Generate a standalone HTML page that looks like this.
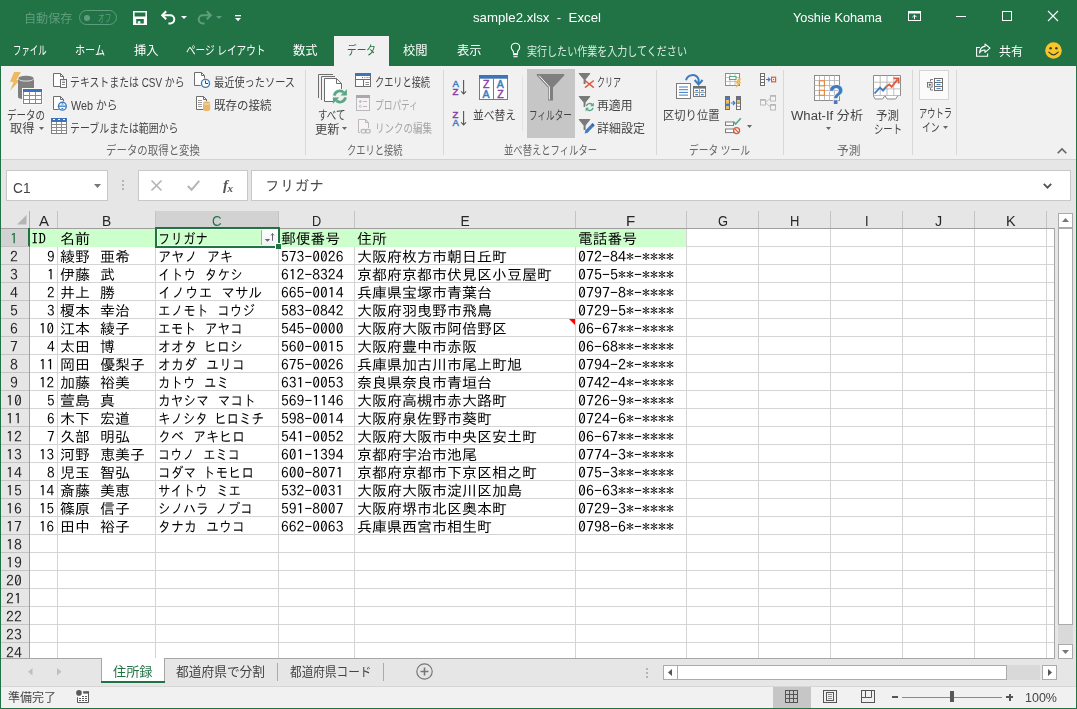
<!DOCTYPE html>
<html lang="ja"><head><meta charset="utf-8"><title>sample2.xlsx - Excel</title>
<style>
html,body{margin:0;padding:0;background:#fff}
#w{position:relative;width:1077px;height:709px;overflow:hidden;background:#e6e6e6;font-family:"Liberation Sans","Noto Sans CJK JP",sans-serif}
.t{position:absolute;white-space:pre;line-height:20px;transform-origin:0 50%}
.u{font-family:"Liberation Sans","Noto Sans CJK JP",sans-serif}
.c{font-family:"IPAGothic","Liberation Sans",sans-serif}
.s{letter-spacing:-4.67px}
#tx{position:absolute;left:0;top:0;width:1077px;height:709px;will-change:transform}
.a{position:absolute}
svg{position:absolute;overflow:visible}
.vs{position:absolute;width:1px;background:#d4d4d4}
.hl{position:absolute;height:1px;background:#d4d4d4;left:30px}
.vl{position:absolute;width:1px;background:#d4d4d4;top:229px}
</style></head><body><div id="w">
<div class="a" style="left:0px;top:0px;width:1077px;height:66px;background:#217346;"></div><div class="a" style="left:334px;top:36px;width:55px;height:30px;background:#f1f1f1;"></div><div class="a" style="left:79px;top:10px;width:36px;height:13px;border:1px solid #5e9e7d;border-radius:8px"></div><div class="a" style="left:84px;top:14.5px;width:6px;height:6px;border-radius:3px;background:#5e9e7d"></div><svg style="left:133px;top:11px" width="14" height="14" viewBox="0 0 14 14"><path d="M0 0H14V14H0Z M1.6 1.6V5.6H12.4V1.6Z M3.2 8V12.4H10.8V8Z" fill="#fff" fill-rule="evenodd"/><rect x="4.8" y="10.2" width="2.6" height="2.4" fill="#fff"/></svg><svg style="left:161px;top:10px" width="16" height="14" viewBox="0 0 16 14"><path d="M5.2 1.2 1.2 5.2 5.2 9.2" fill="none" stroke="#fff" stroke-width="2"/><path d="M1.6 5.2H9.2A4.1 4.1 0 0 1 9.2 13.4H7.4" fill="none" stroke="#fff" stroke-width="2"/></svg><svg style="left:180.5px;top:16px" width="6" height="3" viewBox="0 0 6 3"><path d="M0 0H6L3 3Z" fill="#fff"/></svg><svg style="left:196px;top:10px" width="16" height="14" viewBox="0 0 16 14"><path d="M10.8 1.2 14.8 5.2 10.8 9.2" fill="none" stroke="#5e9e7d" stroke-width="2"/><path d="M14.4 5.2H6.8A4.1 4.1 0 0 0 6.8 13.4H8.6" fill="none" stroke="#5e9e7d" stroke-width="2"/></svg><svg style="left:216px;top:16px" width="6" height="3" viewBox="0 0 6 3"><path d="M0 0H6L3 3Z" fill="#5e9e7d"/></svg><svg style="left:235.3px;top:14.8px" width="6" height="7" viewBox="0 0 6 7"><rect x="0" y="0" width="6" height="1.3" fill="#fff"/><path d="M0 3H6L3 6.2Z" fill="#fff"/></svg><svg style="left:908px;top:11px" width="13" height="10" viewBox="0 0 13 10"><rect x="0.5" y="0.5" width="12" height="9" fill="none" stroke="#fff"/><rect x="0.5" y="0.5" width="12" height="2" fill="#fff"/><path d="M6.5 8.2V4.2M4.4 6.2 6.5 4.1 8.6 6.2" fill="none" stroke="#fff"/></svg><div class="a" style="left:956px;top:16px;width:10px;height:1px;background:#fff;"></div><div class="a" style="left:1002px;top:11px;width:8px;height:8px;border:1px solid #fff"></div><svg style="left:1048px;top:11px" width="10" height="10" viewBox="0 0 10 10"><path d="M0 0 10 10M10 0 0 10" stroke="#fff" stroke-width="1.1" fill="none"/></svg><svg style="left:510px;top:42px" width="11" height="16" viewBox="0 0 11 16"><path d="M3.4 11.2V9.8C3.4 8.7 1.3 7.7 1.3 5.4A4.2 4.2 0 0 1 9.7 5.4C9.7 7.7 7.6 8.7 7.6 9.8V11.2" fill="none" stroke="#fff" stroke-width="1.1"/><rect x="3.1" y="11.2" width="4.8" height="2" fill="#fff"/><path d="M3.4 14.7H7.6" stroke="#fff" stroke-width="1.1"/></svg><svg style="left:976px;top:43px" width="15" height="14" viewBox="0 0 15 14"><path d="M3.8 4.5H0.6V13.3H11.6V10.6" fill="none" stroke="#fff" stroke-width="1.1"/><path d="M9 1 14 5.2 9 9.4V7C6 7 4.4 8 3.6 10 3.8 6 6 3.6 9 3.4Z" fill="none" stroke="#fff" stroke-width="1.1" stroke-linejoin="round"/></svg><svg style="left:1044.5px;top:42px" width="17" height="17" viewBox="0 0 17 17"><circle cx="8.5" cy="8.5" r="8.3" fill="#f7c628"/><circle cx="5.6" cy="6.3" r="1.2" fill="#3b3b3b"/><circle cx="11.4" cy="6.3" r="1.2" fill="#3b3b3b"/><path d="M3.8 10.2Q8.5 15.4 13.2 10.2" fill="none" stroke="#3b3b3b" stroke-width="1.2" stroke-linecap="round"/></svg><div class="a" style="left:1px;top:66px;width:1075px;height:93px;background:#f1f1f1;"></div><div class="a" style="left:1px;top:159px;width:1075px;height:1px;background:#d2d2d2;"></div><div class="vs" style="left:305px;top:70px;height:85px;background:#d8d8d8"></div><div class="vs" style="left:443px;top:70px;height:85px;background:#d8d8d8"></div><div class="vs" style="left:656px;top:70px;height:85px;background:#d8d8d8"></div><div class="vs" style="left:783px;top:70px;height:85px;background:#d8d8d8"></div><div class="vs" style="left:912px;top:70px;height:85px;background:#d8d8d8"></div><div class="vs" style="left:956px;top:70px;height:85px;background:#d8d8d8"></div><div class="vs" style="left:522px;top:76px;height:55px;background:#e2e2e2"></div><div class="a" style="left:527px;top:69px;width:48px;height:69px;background:#c6c6c6;"></div><svg style="left:38.5px;top:127px" width="5" height="3" viewBox="0 0 5 3"><path d="M0 0H5L2.5 3Z" fill="#666"/></svg><svg style="left:342px;top:127px" width="5" height="3" viewBox="0 0 5 3"><path d="M0 0H5L2.5 3Z" fill="#666"/></svg><svg style="left:747px;top:125px" width="5" height="3" viewBox="0 0 5 3"><path d="M0 0H5L2.5 3Z" fill="#666"/></svg><svg style="left:826px;top:127px" width="5" height="3" viewBox="0 0 5 3"><path d="M0 0H5L2.5 3Z" fill="#666"/></svg><div class="a" style="left:919px;top:70px;width:30px;height:30px;border:1px solid #d4d4d4;background:#fbfbfb;box-sizing:border-box"></div><svg style="left:943px;top:126px" width="5" height="3" viewBox="0 0 5 3"><path d="M0 0H5L2.5 3Z" fill="#666"/></svg><svg style="left:1057px;top:148px" width="10" height="6" viewBox="0 0 10 6"><path d="M0.7 5.3 5 1 9.3 5.3" fill="none" stroke="#666" stroke-width="1.6"/></svg><svg style="left:0;top:0" width="1077" height="160" viewBox="0 0 1077 160"><path d="M14.1 72H20.9L16.4 79.9 19.9 80.2 10 90.8 13.6 81.9 10 81.7Z" fill="#efb960"/><path d="M18 78.4V97A8 2.6 0 0 0 34 97V78.4Z" fill="#7f7f7f"/><ellipse cx="26" cy="78.6" rx="8" ry="3" fill="#e4e4e4"/><ellipse cx="26" cy="78.2" rx="7.6" ry="2.4" fill="#7f7f7f"/><rect x="22" y="88" width="21" height="17" fill="#f8f8f8"/><rect x="23.5" y="89.5" width="18" height="14" fill="#fff" stroke="#858585"/><rect x="23" y="89" width="19" height="3" fill="#3e73b7"/><path d="M29.5 92V103M35.5 92V103M24 95.5H41M24 99.5H41" stroke="#8d8d8d" fill="none"/><path d="M53.5 73.5H60.5L63.5 76.5V86.5H53.5Z" fill="#fff" stroke="#6e6e6e"/><path d="M60.5 73.5V76.5H63.5" fill="none" stroke="#6e6e6e"/><rect x="60.5" y="79.5" width="6" height="8" fill="#fff" stroke="#6e6e6e"/><path d="M62 82.5H65M62 84.5H65" stroke="#8c8c8c" stroke-width="1"/><path d="M62 81H65" stroke="#8c8c8c" stroke-width=".7"/><path d="M53.5 96.5H60.5L63.5 99.5V109.5H53.5Z" fill="#fff" stroke="#6e6e6e"/><path d="M60.5 96.5V99.5H63.5" fill="none" stroke="#6e6e6e"/><circle cx="62.4" cy="106.2" r="4.9" fill="#f1f1f1"/><circle cx="62.4" cy="106.2" r="3.9" fill="#fff" stroke="#3e7cc2" stroke-width="1.4"/><path d="M59 106.2H65.8" stroke="#3e7cc2" stroke-width="1.3"/><path d="M61 104.4 62.4 103 63.8 104.4ZM61 108 62.4 109.4 63.8 108Z" fill="#3e7cc2"/><rect x="51.5" y="118.5" width="15" height="15" fill="#fff" stroke="#7f7f7f"/><rect x="51" y="118" width="16" height="4" fill="#3e73b7"/><path d="M53 119.5H55M58 119.5H60M63 119.5H65" stroke="#fff" stroke-width="1"/><path d="M56.5 122V133M61.5 122V133M52 124.5H66M52 127.5H66M52 130.5H66" stroke="#8d8d8d" fill="none"/><path d="M194.5 72.5H201.5L204.5 75.5V85.5H194.5Z" fill="#fff" stroke="#6e6e6e"/><path d="M201.5 72.5V75.5H204.5" fill="none" stroke="#6e6e6e"/><circle cx="205.5" cy="83.4" r="5.2" fill="#f1f1f1"/><circle cx="205.5" cy="83.4" r="4" fill="#fff" stroke="#3e7cc2" stroke-width="1.4"/><path d="M205.5 80.6V83.5H208" fill="none" stroke="#444" stroke-width="1"/><path d="M196.5 96.5H203.5L206.5 99.5V109.5H196.5Z" fill="#fff" stroke="#6e6e6e"/><path d="M203.5 96.5V99.5H206.5" fill="none" stroke="#6e6e6e"/><path d="M198 100.5H202M198 102.5H202M198 104.5H202M198 106.5H202" stroke="#9a9a9a" stroke-width="1"/><path d="M203 102.8V109.6A3.6 1.5 0 0 0 210.2 109.6V102.8Z" fill="#e9b86d"/><ellipse cx="206.6" cy="102.9" rx="3.6" ry="1.6" fill="#f6e3c3"/><ellipse cx="206.6" cy="102.6" rx="3.5" ry="1.2" fill="#e9b86d"/><path d="M318.5 98V74.5H333" fill="none" stroke="#6e6e6e"/><path d="M321.5 100V76.5H335" fill="none" stroke="#6e6e6e"/><path d="M324.5 78.5H336.5L341.5 83.5V101.5H324.5Z" fill="#fff" stroke="#6e6e6e"/><path d="M336.5 78.5V83.5H341.5" fill="none" stroke="#6e6e6e"/><circle cx="339.9" cy="96.5" r="7.8" fill="#f1f1f1"/><path d="M334.4 95.6A5.5 5.5 0 0 1 343.6 92.4" fill="none" stroke="#5aa786" stroke-width="2.8"/><path d="M346.9 89.2V95.6H340.5Z" fill="#5aa786"/><path d="M345.4 97.4A5.5 5.5 0 0 1 336.2 100.6" fill="none" stroke="#5aa786" stroke-width="2.8"/><path d="M332.9 103.8V97.4H339.3Z" fill="#5aa786"/><rect x="355.5" y="73.5" width="15" height="13" fill="#fff" stroke="#6e6e6e"/><rect x="355" y="73" width="16" height="3" fill="#3e73b7"/><path d="M363.5 79V86.5M356 79.5H370" stroke="#6e6e6e"/><path d="M365.5 82.5H369M365.5 84.5H369" stroke="#8c8c8c" stroke-width="1"/><path d="M362 77.6H363M364.3 77.6H365.3M366.6 77.6H367.6M368.6 77.6H369.6" stroke="#6e6e6e" stroke-width="1"/><rect x="356.5" y="95.5" width="13" height="15" fill="#f6f2f6" stroke="#b9b9b9"/><rect x="356" y="95" width="14" height="3" fill="#a9a9a9"/><circle cx="360.3" cy="101.6" r="1.3" fill="#b9b9b9"/><circle cx="360.3" cy="106.4" r="1.1" fill="none" stroke="#b9b9b9" stroke-width=".8"/><path d="M363 101.5H367M363 106.5H367" stroke="#b9b9b9"/><path d="M358.5 119.5H365.5L368.5 122.5V132.5H358.5Z" fill="#f6f2f6" stroke="#b9b9b9"/><path d="M365.5 119.5V122.5H368.5" fill="none" stroke="#b9b9b9"/><rect x="360" y="128" width="11.5" height="6.5" fill="#f1f1f1"/><ellipse cx="363.6" cy="131.2" rx="2.5" ry="1.8" fill="none" stroke="#b9b9b9" stroke-width="1.2"/><ellipse cx="367.8" cy="131.2" rx="2.5" ry="1.8" fill="none" stroke="#b9b9b9" stroke-width="1.2"/><text x="452.4" y="87.1" font-family="Liberation Sans,sans-serif" font-size="9.6" fill="#3e7cc2" stroke="#3e7cc2" stroke-width=".45">A</text><text x="452.4" y="95" font-family="Liberation Sans,sans-serif" font-size="9.6" fill="#8b3fa9" stroke="#8b3fa9" stroke-width=".45">Z</text><path d="M463.6 80V94M461.2 91.4 463.6 94 466 91.4" fill="none" stroke="#555" stroke-width="1.1"/><text x="452.4" y="117.8" font-family="Liberation Sans,sans-serif" font-size="9.6" fill="#8b3fa9" stroke="#8b3fa9" stroke-width=".45">Z</text><text x="452.4" y="125.7" font-family="Liberation Sans,sans-serif" font-size="9.6" fill="#3e7cc2" stroke="#3e7cc2" stroke-width=".45">A</text><path d="M463.6 111V125M461.2 122.4 463.6 125 466 122.4" fill="none" stroke="#555" stroke-width="1.1"/><rect x="479.5" y="75.5" width="28" height="24" fill="#fff" stroke="#7a7a7a"/><rect x="479" y="75" width="29" height="3.7" fill="#3e73b7"/><path d="M493.5 78.7V99.5" stroke="#7a7a7a"/><text x="483" y="87.6" font-family="Liberation Sans,sans-serif" font-size="10.5" fill="#8b3fa9" stroke="#8b3fa9" stroke-width=".5">Z</text><text x="482.6" y="97.8" font-family="Liberation Sans,sans-serif" font-size="10.5" fill="#3e7cc2" stroke="#3e7cc2" stroke-width=".5">A</text><text x="496.8" y="87.6" font-family="Liberation Sans,sans-serif" font-size="10.5" fill="#3e7cc2" stroke="#3e7cc2" stroke-width=".5">A</text><text x="497.2" y="97.8" font-family="Liberation Sans,sans-serif" font-size="10.5" fill="#8b3fa9" stroke="#8b3fa9" stroke-width=".5">Z</text><path d="M536.8 74H564.2V75.5L553 87.5V100.6H548V87.5L536.8 75.5Z" fill="#7f7f7f"/><path d="M539 75.6 549.3 86.8V99.5" fill="none" stroke="#fff" stroke-width="1"/><path d="M578.8 73H590.2V73.8L585.6 79.6V84H583.6V79.6L578.8 73.8Z" fill="#7a7a7a"/><path d="M578.8 96H590.2V96.8L585.6 102.6V107H583.6V102.6L578.8 96.8Z" fill="#7a7a7a"/><path d="M578.8 119H590.2V119.8L585.6 125.6V130H583.6V125.6L578.8 119.8Z" fill="#7a7a7a"/><path d="M585 80.5 593.8 87.6M593.8 80.5 585 87.6" stroke="#de5a3a" stroke-width="1.5" fill="none"/><circle cx="589.7" cy="107" r="4.6" fill="#f1f1f1"/><path d="M586.4 106.2A3.4 3.4 0 0 1 592.2 104.6" fill="none" stroke="#5aa786" stroke-width="1.5"/><path d="M593.8 102.6V106.2H590.2Z" fill="#5aa786"/><path d="M593 107.8A3.4 3.4 0 0 1 587.2 109.4" fill="none" stroke="#5aa786" stroke-width="1.5"/><path d="M585.6 111.4V107.8H589.2Z" fill="#5aa786"/><path d="M586.2 131.8 592.4 125.4" stroke="#3e7cc2" stroke-width="3.2" fill="none"/><path d="M584.6 133.6 585.4 130.6 587.6 132.8Z" fill="#3e7cc2"/><path d="M592.2 125.6 593.6 124.2" stroke="#2f63a5" stroke-width="3.2"/><rect x="676.5" y="83.5" width="14" height="15" fill="#fff" stroke="#7a7a7a"/><path d="M679 87H688M679 89.7H688M679 92.4H688M679 95.1H688" stroke="#3e7cc2" stroke-width="1"/><rect x="693.5" y="86.5" width="12" height="10" fill="#fff" stroke="#7a7a7a"/><rect x="693" y="86" width="13" height="2.6" fill="#6e6e6e"/><path d="M699.5 88.6V96.5M693.5 92.5H705.5" stroke="#8c8c8c" stroke-width=".8"/><path d="M695.3 90.6H698M701 90.6H703.7M695.3 94.6H698M701 94.6H703.7" stroke="#3e7cc2" stroke-width="1.1"/><path d="M686 80.2A6.6 6.6 0 0 1 698.6 79.4V83.4" fill="none" stroke="#3e7cc2" stroke-width="2"/><path d="M694.6 80 698.6 84.4 702.6 80" fill="none" stroke="#3e7cc2" stroke-width="2"/><rect x="725.5" y="73.5" width="14" height="12" fill="#fff" stroke="#8c8c8c"/><path d="M725.5 77.5H739.5M725.5 81.5H739.5M730 73.5V85.5M735 73.5V85.5" stroke="#b5b5b5" stroke-width=".8"/><rect x="729.5" y="76.5" width="6.5" height="3" fill="#fff" stroke="#5aa786" stroke-width="1.1"/><path d="M738 78.6H741.4L739.4 82H741.4L735.6 88.4 737.4 83.4H735.4Z" fill="#efb960"/><rect x="725.5" y="96.5" width="4" height="13" fill="#fff" stroke="#6e6e6e"/><rect x="736.5" y="96.5" width="4" height="13" fill="#fff" stroke="#6e6e6e"/><rect x="726" y="97" width="3" height="3" fill="#3e7cc2"/><rect x="726" y="100.2" width="3" height="3" fill="#efb960"/><rect x="726" y="103.4" width="3" height="3" fill="#3e7cc2"/><rect x="726" y="106.4" width="3" height="2.6" fill="#efb960"/><rect x="737" y="97" width="3" height="3" fill="#3e7cc2"/><rect x="737" y="100.2" width="3" height="3" fill="#efb960"/><path d="M736.5 103.3H740.5M736.5 106.3H740.5" stroke="#6e6e6e" stroke-width=".8"/><path d="M730.8 103H734.6M733 101 735 103 733 105" fill="none" stroke="#3e7cc2" stroke-width="1.1"/><rect x="725.5" y="122" width="8" height="3.4" fill="#fff" stroke="#7a7a7a"/><rect x="725.5" y="129" width="8" height="3.6" fill="#fff" stroke="#7a7a7a"/><path d="M733.4 121.6 735.6 124 740.8 118.2" fill="none" stroke="#5aa786" stroke-width="1.6"/><circle cx="736.6" cy="130.6" r="3" fill="#f1f1f1" stroke="#de5a3a" stroke-width="1.3"/><path d="M734.6 128.6 738.6 132.6" stroke="#de5a3a" stroke-width="1.2"/><rect x="760.5" y="73.5" width="4" height="12" fill="#fff" stroke="#6e6e6e"/><path d="M760.5 76.5H764.5M760.5 79.5H764.5M760.5 82.5H764.5" stroke="#6e6e6e"/><path d="M766 79.5H769.6M768 77.6 770 79.5 768 81.4" fill="none" stroke="#3e7cc2" stroke-width="1.1"/><rect x="771.6" y="77.2" width="4" height="4.6" fill="#fff" stroke="#de5a3a" stroke-width="1.2"/><rect x="773" y="78.8" width="1.2" height="1.4" fill="#de5a3a"/><rect x="760.5" y="99.5" width="5" height="5.5" fill="#f4f4f4" stroke="#b9b9b9"/><rect x="770.5" y="95.5" width="5" height="5.5" fill="#f4f4f4" stroke="#b9b9b9"/><rect x="770.5" y="104.5" width="5" height="5.5" fill="#f4f4f4" stroke="#b9b9b9"/><path d="M765.5 102.3 770.5 98.3M765.5 102.3 770.5 107.3" stroke="#b9b9b9" stroke-width=".9"/><rect x="760" y="99" width="6" height="1.8" fill="#b9b9b9"/><rect x="770" y="95" width="6" height="1.8" fill="#b9b9b9"/><rect x="770" y="104" width="6" height="1.8" fill="#b9b9b9"/><rect x="814.5" y="75.5" width="25" height="25" fill="#fff" stroke="#8c8c8c"/><path d="M819.5 75.5V100.5M824.5 75.5V100.5M829.5 75.5V100.5M834.5 75.5V100.5M814.5 80.5H839.5M814.5 85.5H839.5M814.5 90.5H839.5M814.5 95.5H839.5" stroke="#b5b5b5" stroke-width=".9"/><rect x="819.4" y="80.8" width="5" height="5" fill="#fff" stroke="#e68a3c" stroke-width="1.2"/><rect x="819.4" y="90.3" width="5" height="5" fill="#fff" stroke="#e68a3c" stroke-width="1.2"/><text transform="translate(828.4 103.6) scale(.9 1)" font-family="Liberation Sans,sans-serif" font-weight="bold" font-size="27.6" fill="#3e7cc2" stroke="#f1f1f1" stroke-width="1.6" paint-order="stroke">?</text><path d="M873.5 75.5H900.5V95.5H898L895.5 99H887L885 95.5 882.5 99H875L873.5 96Z" fill="#fff" stroke="#8c8c8c"/><path d="M880.2 75.5V95.5M887 75.5V95.5M893.8 75.5V95.5M873.5 82.2H900.5M873.5 88.9H900.5M873.5 95.5H900.5" stroke="#b5b5b5" stroke-width=".9"/><path d="M874.5 93.5 880 87.6 883 90.6 886.2 86.6" fill="none" stroke="#3e7cc2" stroke-width="1.8"/><path d="M886.2 86.6 889.4 84.4 891.6 86.8 897.6 79.4" fill="none" stroke="#de5a3a" stroke-width="1.8"/><path d="M893.6 78.4H898.6V83.6" fill="none" stroke="#de5a3a" stroke-width="1.8"/><rect x="934.5" y="78.5" width="8" height="12" fill="#fff" stroke="#6e6e6e"/><path d="M934.5 82.5H942.5M934.5 86.5H942.5" stroke="#6e6e6e"/><path d="M936.5 80.6H940.6M936.5 84.6H940.6M936.5 88.6H940.6" stroke="#3e7cc2" stroke-width="1"/><rect x="927.5" y="82.5" width="4.6" height="4.6" fill="#fff" stroke="#6e6e6e" stroke-width=".9"/><path d="M928.6 84.8H931M929.8 83.6V86" stroke="#444" stroke-width=".8"/><path d="M933 79.5H930.5V81.5M933 90H930.5V88" fill="none" stroke="#6e6e6e" stroke-width=".9"/></svg><div class="a" style="left:6px;top:170px;width:102px;height:31px;border:1px solid #c8c8c8;background:#fff;box-sizing:border-box"></div><svg style="left:94px;top:183.5px" width="7" height="4" viewBox="0 0 7 4"><path d="M0 0H7L3.5 4Z" fill="#777"/></svg><div class="a" style="left:122px;top:180px;width:2px;height:2px;background:#b4b4b4;"></div><div class="a" style="left:122px;top:184px;width:2px;height:2px;background:#b4b4b4;"></div><div class="a" style="left:122px;top:188px;width:2px;height:2px;background:#b4b4b4;"></div><div class="a" style="left:138px;top:170px;width:110px;height:31px;border:1px solid #c8c8c8;background:#fff;box-sizing:border-box"></div><svg style="left:151px;top:180px" width="11" height="11" viewBox="0 0 11 11"><path d="M0.5 0.5 10.5 10.5M10.5 0.5 0.5 10.5" stroke="#b4b4b4" stroke-width="1.6" fill="none"/></svg><svg style="left:187px;top:180px" width="13" height="11" viewBox="0 0 13 11"><path d="M0.8 6 4.6 9.8 12.2 0.8" stroke="#b4b4b4" stroke-width="2" fill="none"/></svg><span class="t" style="left:223px;top:174.5px;font-family:'Liberation Serif',serif;font-style:italic;font-weight:bold;font-size:15px;color:#555;will-change:transform">f<span style="font-size:11px;position:relative;top:1.5px;left:-0.5px">x</span></span><div class="a" style="left:251px;top:170px;width:820px;height:31px;border:1px solid #c8c8c8;background:#fff;box-sizing:border-box"></div><svg style="left:1043px;top:183px" width="9" height="6" viewBox="0 0 9 6"><path d="M0.8 0.8 4.5 4.6 8.2 0.8" fill="none" stroke="#555" stroke-width="1.9"/></svg><div class="a" style="left:1px;top:211px;width:1053px;height:447px;background:#fff;"></div><div class="a" style="left:1px;top:211px;width:1053px;height:17px;background:#e6e6e6;"></div><div class="a" style="left:1px;top:228px;width:1053px;height:1px;background:#9f9f9f;"></div><div class="a" style="left:1px;top:229px;width:28px;height:429px;background:#e6e6e6;"></div><div class="a" style="left:29px;top:229px;width:1px;height:429px;background:#9f9f9f;"></div><svg style="left:16.5px;top:215.3px" width="9.5" height="9.5" viewBox="0 0 9.5 9.5"><path d="M9.5 0V9.5H0Z" fill="#b4b4b4"/></svg><div class="a" style="left:29px;top:211px;width:1px;height:17px;background:#b0b0b0;"></div><div class="a" style="left:57px;top:211px;width:1px;height:17px;background:#c4c4c4;"></div><div class="a" style="left:155px;top:211px;width:1px;height:17px;background:#c4c4c4;"></div><div class="a" style="left:278px;top:211px;width:1px;height:17px;background:#c4c4c4;"></div><div class="a" style="left:354px;top:211px;width:1px;height:17px;background:#c4c4c4;"></div><div class="a" style="left:575px;top:211px;width:1px;height:17px;background:#c4c4c4;"></div><div class="a" style="left:686px;top:211px;width:1px;height:17px;background:#c4c4c4;"></div><div class="a" style="left:758px;top:211px;width:1px;height:17px;background:#c4c4c4;"></div><div class="a" style="left:830px;top:211px;width:1px;height:17px;background:#c4c4c4;"></div><div class="a" style="left:902px;top:211px;width:1px;height:17px;background:#c4c4c4;"></div><div class="a" style="left:974px;top:211px;width:1px;height:17px;background:#c4c4c4;"></div><div class="a" style="left:1046px;top:211px;width:1px;height:17px;background:#c4c4c4;"></div><div class="a" style="left:156px;top:211px;width:122px;height:16px;background:#d2d2d2;"></div><div class="a" style="left:1px;top:229px;width:27px;height:17px;background:#d2d2d2;"></div><div class="a" style="left:28px;top:228px;width:2px;height:19px;background:#217346;"></div><div class="hl" style="top:246px;width:1024px"></div><div class="a" style="left:1px;top:246px;width:28px;height:1px;background:#c4c4c4;"></div><div class="hl" style="top:264px;width:1024px"></div><div class="a" style="left:1px;top:264px;width:28px;height:1px;background:#c4c4c4;"></div><div class="hl" style="top:282px;width:1024px"></div><div class="a" style="left:1px;top:282px;width:28px;height:1px;background:#c4c4c4;"></div><div class="hl" style="top:300px;width:1024px"></div><div class="a" style="left:1px;top:300px;width:28px;height:1px;background:#c4c4c4;"></div><div class="hl" style="top:318px;width:1024px"></div><div class="a" style="left:1px;top:318px;width:28px;height:1px;background:#c4c4c4;"></div><div class="hl" style="top:336px;width:1024px"></div><div class="a" style="left:1px;top:336px;width:28px;height:1px;background:#c4c4c4;"></div><div class="hl" style="top:354px;width:1024px"></div><div class="a" style="left:1px;top:354px;width:28px;height:1px;background:#c4c4c4;"></div><div class="hl" style="top:372px;width:1024px"></div><div class="a" style="left:1px;top:372px;width:28px;height:1px;background:#c4c4c4;"></div><div class="hl" style="top:390px;width:1024px"></div><div class="a" style="left:1px;top:390px;width:28px;height:1px;background:#c4c4c4;"></div><div class="hl" style="top:408px;width:1024px"></div><div class="a" style="left:1px;top:408px;width:28px;height:1px;background:#c4c4c4;"></div><div class="hl" style="top:426px;width:1024px"></div><div class="a" style="left:1px;top:426px;width:28px;height:1px;background:#c4c4c4;"></div><div class="hl" style="top:444px;width:1024px"></div><div class="a" style="left:1px;top:444px;width:28px;height:1px;background:#c4c4c4;"></div><div class="hl" style="top:462px;width:1024px"></div><div class="a" style="left:1px;top:462px;width:28px;height:1px;background:#c4c4c4;"></div><div class="hl" style="top:480px;width:1024px"></div><div class="a" style="left:1px;top:480px;width:28px;height:1px;background:#c4c4c4;"></div><div class="hl" style="top:498px;width:1024px"></div><div class="a" style="left:1px;top:498px;width:28px;height:1px;background:#c4c4c4;"></div><div class="hl" style="top:516px;width:1024px"></div><div class="a" style="left:1px;top:516px;width:28px;height:1px;background:#c4c4c4;"></div><div class="hl" style="top:534px;width:1024px"></div><div class="a" style="left:1px;top:534px;width:28px;height:1px;background:#c4c4c4;"></div><div class="hl" style="top:552px;width:1024px"></div><div class="a" style="left:1px;top:552px;width:28px;height:1px;background:#c4c4c4;"></div><div class="hl" style="top:570px;width:1024px"></div><div class="a" style="left:1px;top:570px;width:28px;height:1px;background:#c4c4c4;"></div><div class="hl" style="top:588px;width:1024px"></div><div class="a" style="left:1px;top:588px;width:28px;height:1px;background:#c4c4c4;"></div><div class="hl" style="top:606px;width:1024px"></div><div class="a" style="left:1px;top:606px;width:28px;height:1px;background:#c4c4c4;"></div><div class="hl" style="top:624px;width:1024px"></div><div class="a" style="left:1px;top:624px;width:28px;height:1px;background:#c4c4c4;"></div><div class="hl" style="top:642px;width:1024px"></div><div class="a" style="left:1px;top:642px;width:28px;height:1px;background:#c4c4c4;"></div><div class="vl" style="left:57px;height:429px"></div><div class="vl" style="left:155px;height:429px"></div><div class="vl" style="left:278px;height:429px"></div><div class="vl" style="left:354px;height:429px"></div><div class="vl" style="left:575px;height:429px"></div><div class="vl" style="left:686px;height:429px"></div><div class="vl" style="left:758px;height:429px"></div><div class="vl" style="left:830px;height:429px"></div><div class="vl" style="left:902px;height:429px"></div><div class="vl" style="left:974px;height:429px"></div><div class="vl" style="left:1046px;height:429px"></div><div class="a" style="left:30px;top:229px;width:656px;height:18px;background:#ccffcc;"></div><svg style="left:569px;top:319px" width="6" height="6" viewBox="0 0 6 6"><path d="M0 0H6V6Z" fill="#ff0000"/></svg><div class="a" style="left:155px;top:227px;width:121px;height:17px;border:2px solid #217346;box-shadow:inset 0 0 0 1px #fff"></div><div class="a" style="left:261px;top:229px;width:16px;height:17px;border-left:1px solid #a9a9b2;background:linear-gradient(#fff,#f1f1f5);box-sizing:border-box"></div><div class="a" style="left:261px;top:229px;width:1px;height:1px;background:#fff;"></div><div class="a" style="left:261px;top:245px;width:1px;height:1px;background:#fff;"></div><svg style="left:264px;top:232px" width="11" height="11" viewBox="0 0 11 11"><path d="M0.8 7H6.2L3.5 9.8Z" fill="#666"/><path d="M8.5 8.8V1.6M7 3.4 8.5 1.6 10 3.4" fill="none" stroke="#666" stroke-width="1"/></svg><div class="a" style="left:275px;top:243px;width:5px;height:5px;background:#217346;border:1px solid #fff;border-right:0;border-bottom:0"></div><div class="a" style="left:276px;top:244px;width:5px;height:5px;background:#217346;"></div><div class="a" style="left:1054px;top:211px;width:22px;height:448px;background:#e6e6e6;"></div><div class="a" style="left:1054px;top:228px;width:1px;height:431px;background:#a6a6a6;"></div><div class="a" style="left:1px;top:658px;width:1054px;height:1px;background:#a6a6a6;"></div><div class="a" style="left:1058px;top:213px;width:15px;height:15px;border:1px solid #ababab;background:#fff;box-sizing:border-box"></div><svg style="left:1062px;top:218px" width="7" height="4" viewBox="0 0 7 4"><path d="M0 4H7L3.5 0Z" fill="#777"/></svg><div class="a" style="left:1058px;top:228px;width:15px;height:416px;background:#d9d9d9;"></div><div class="a" style="left:1058px;top:228px;width:15px;height:397px;border:1px solid #ababab;background:#fff;box-sizing:border-box"></div><div class="a" style="left:1058px;top:644px;width:15px;height:15px;border:1px solid #ababab;background:#fff;box-sizing:border-box"></div><svg style="left:1062px;top:650px" width="7" height="4" viewBox="0 0 7 4"><path d="M0 0H7L3.5 4Z" fill="#777"/></svg><div class="a" style="left:1px;top:659px;width:1075px;height:27px;background:#e6e6e6;"></div><div class="a" style="left:102px;top:658px;width:62px;height:23px;background:#fff;"></div><div class="a" style="left:101px;top:658px;width:1px;height:24px;background:#a6a6a6;"></div><div class="a" style="left:164px;top:658px;width:1px;height:24px;background:#a6a6a6;"></div><div class="a" style="left:101px;top:681px;width:64px;height:2px;background:#217346;"></div><svg style="left:28px;top:668px" width="4.5" height="7.4" viewBox="0 0 4.5 7.4"><path d="M4.5 0V7.4L0 3.7Z" fill="#c0c0c0"/></svg><svg style="left:56.8px;top:668px" width="4.5" height="7.4" viewBox="0 0 4.5 7.4"><path d="M0 0V7.4L4.5 3.7Z" fill="#c0c0c0"/></svg><div class="a" style="left:277px;top:663px;width:1px;height:18px;background:#ababab;"></div><div class="a" style="left:383px;top:663px;width:1px;height:18px;background:#ababab;"></div><svg style="left:416px;top:663px" width="17" height="17" viewBox="0 0 17 17"><circle cx="8.5" cy="8.5" r="7.7" fill="none" stroke="#777" stroke-width="1.2"/><path d="M8.5 4.5V12.5M4.5 8.5H12.5" stroke="#777" stroke-width="1.6"/></svg><div class="a" style="left:646px;top:668px;width:2px;height:2px;background:#b4b4b4;"></div><div class="a" style="left:646px;top:672px;width:2px;height:2px;background:#b4b4b4;"></div><div class="a" style="left:646px;top:676px;width:2px;height:2px;background:#b4b4b4;"></div><div class="a" style="left:663px;top:665px;width:15px;height:15px;border:1px solid #ababab;background:#fff;box-sizing:border-box"></div><svg style="left:668px;top:669px" width="4" height="7" viewBox="0 0 4 7"><path d="M4 0V7L0 3.5Z" fill="#555"/></svg><div class="a" style="left:678px;top:665px;width:362px;height:15px;background:#d9d9d9;"></div><div class="a" style="left:677px;top:665px;width:330px;height:15px;border:1px solid #ababab;background:#fff;box-sizing:border-box"></div><div class="a" style="left:1042px;top:665px;width:15px;height:15px;border:1px solid #ababab;background:#fff;box-sizing:border-box"></div><svg style="left:1048px;top:669px" width="4" height="7" viewBox="0 0 4 7"><path d="M0 0V7L4 3.5Z" fill="#555"/></svg><div class="a" style="left:1px;top:686px;width:1075px;height:22px;background:#f1f1f1;"></div><div class="a" style="left:1px;top:686px;width:1075px;height:1px;background:#d6d6d6;"></div><svg style="left:76px;top:690px" width="14" height="14" viewBox="0 0 14 14"><rect x="1" y="3" width="12" height="10" fill="#fdfdfd"/><circle cx="2.97" cy="2.9" r="2.8" fill="#595959"/><rect x="7.2" y="1.2" width="5.6" height="2.4" fill="#595959"/><path d="M12.5 1.5V12.5H1.5V7.2" fill="none" stroke="#595959"/><path d="M6 6.5H8M9 6.5H11M3 8.5H5M6 8.5H8M9 8.5H11M3 10.5H5M6 10.5H8M9 10.5H11" stroke="#595959" stroke-width="1"/></svg><div class="a" style="left:773px;top:687px;width:38px;height:21px;background:#c6c6c6;"></div><svg style="left:785px;top:690px" width="13" height="13" viewBox="0 0 13 13"><rect x="0.5" y="0.5" width="12" height="12" fill="none" stroke="#555"/><path d="M0 4.5H13M0 8.5H13M4.5 0V13M8.5 0V13" stroke="#555"/></svg><svg style="left:823px;top:690px" width="14" height="13" viewBox="0 0 14 13"><rect x="0.5" y="0.5" width="13" height="12" fill="none" stroke="#555"/><rect x="3.5" y="2.5" width="7" height="8" fill="none" stroke="#555"/><path d="M5 4.5H9M5 6.5H9M5 8.5H9" stroke="#777" stroke-width=".8"/></svg><svg style="left:861px;top:690px" width="14" height="13" viewBox="0 0 14 13"><rect x="0.5" y="0.5" width="13" height="12" fill="none" stroke="#555"/><path d="M4.5 0V7.5H10.5V0M0 7.5H4.5" fill="none" stroke="#555"/></svg><div class="a" style="left:892px;top:696px;width:6px;height:2px;background:#555;"></div><div class="a" style="left:902px;top:697px;width:100px;height:1px;background:#8a8a8a;"></div><div class="a" style="left:950px;top:691px;width:4px;height:11px;background:#595959;"></div><div class="a" style="left:1006px;top:696px;width:7px;height:2px;background:#555;"></div><div class="a" style="left:1008.5px;top:693.5px;width:2px;height:7px;background:#555;"></div><div class="a" style="left:0px;top:0px;width:1px;height:709px;background:#217346;"></div><div class="a" style="left:1076px;top:0px;width:1px;height:709px;background:#217346;"></div><div class="a" style="left:0px;top:708px;width:1077px;height:1px;background:#217346;"></div><div id="tx"><span class="t u " style="left:23.5px;top:8.5px;font-size:12px;color:#5e9e7d;transform:scaleX(1.010);">自動保存</span>
<span class="t u " style="left:97.5px;top:9px;font-size:10px;color:#5e9e7d;transform:scaleX(0.675);">オフ</span>
<span class="t u " style="left:473px;top:8px;font-size:13px;color:#fff;transform:scaleX(1.018);">sample2.xlsx  -  Excel</span>
<span class="t u " style="left:793px;top:7.5px;font-size:13px;color:#fff;transform:scaleX(0.982);">Yoshie Kohama</span>
<span class="t u " style="left:13px;top:41.2px;font-size:12px;color:#fff;transform:scaleX(0.698);">ファイル</span>
<span class="t u " style="left:75px;top:41.2px;font-size:12px;color:#fff;transform:scaleX(0.842);">ホーム</span>
<span class="t u " style="left:133.5px;top:41.2px;font-size:12px;color:#fff;transform:scaleX(1.020);">挿入</span>
<span class="t u " style="left:186px;top:41.2px;font-size:12px;color:#fff;transform:scaleX(0.802);">ページ レイアウト</span>
<span class="t u " style="left:293px;top:41.2px;font-size:12px;color:#fff;transform:scaleX(1.020);">数式</span>
<span class="t u " style="left:346.5px;top:41.2px;font-size:12px;color:#217346;transform:scaleX(0.805);">データ</span>
<span class="t u " style="left:403px;top:41.2px;font-size:12px;color:#fff;transform:scaleX(1.020);">校閲</span>
<span class="t u " style="left:456.5px;top:41.2px;font-size:12px;color:#fff;transform:scaleX(1.020);">表示</span>
<span class="t u " style="left:527px;top:41.5px;font-size:12px;color:#dcebe2;transform:scaleX(0.836);">実行したい作業を入力してください</span>
<span class="t u " style="left:999px;top:41.5px;font-size:12px;color:#fff;">共有</span>
<span class="t u " style="left:7px;top:105.5px;font-size:12px;color:#444;transform:scaleX(0.791);">データの</span>
<span class="t u " style="left:10px;top:119px;font-size:12px;color:#444;transform:scaleX(1.020);">取得</span>
<span class="t u " style="left:69.5px;top:72.5px;font-size:12px;color:#444;transform:scaleX(0.824);">テキストまたは CSV から</span>
<span class="t u " style="left:70.5px;top:95.5px;font-size:12px;color:#444;transform:scaleX(0.898);">Web から</span>
<span class="t u " style="left:69.5px;top:118.5px;font-size:12px;color:#444;transform:scaleX(0.826);">テーブルまたは範囲から</span>
<span class="t u " style="left:213.5px;top:72.5px;font-size:12px;color:#444;transform:scaleX(0.849);">最近使ったソース</span>
<span class="t u " style="left:213.5px;top:95.5px;font-size:12px;color:#444;transform:scaleX(0.958);">既存の接続</span>
<span class="t u " style="left:106px;top:141px;font-size:12px;color:#666;transform:scaleX(0.870);">データの取得と変換</span>
<span class="t u " style="left:317.5px;top:105.5px;font-size:12px;color:#444;transform:scaleX(0.793);">すべて</span>
<span class="t u " style="left:314.5px;top:119.5px;font-size:12px;color:#444;transform:scaleX(1.020);">更新</span>
<span class="t u " style="left:374.5px;top:72.5px;font-size:12px;color:#444;transform:scaleX(0.764);">クエリと接続</span>
<span class="t u " style="left:374.5px;top:95.5px;font-size:12px;color:#a6a6a6;transform:scaleX(0.725);">プロパティ</span>
<span class="t u " style="left:374.5px;top:118.5px;font-size:12px;color:#a6a6a6;transform:scaleX(0.791);">リンクの編集</span>
<span class="t u " style="left:346.5px;top:141px;font-size:12px;color:#666;transform:scaleX(0.771);">クエリと接続</span>
<span class="t u " style="left:472.5px;top:105.5px;font-size:12px;color:#444;transform:scaleX(0.896);">並べ替え</span>
<span class="t u " style="left:528.5px;top:105.5px;font-size:12px;color:#444;transform:scaleX(0.719);">フィルター</span>
<span class="t u " style="left:597px;top:72.5px;font-size:12px;color:#444;transform:scaleX(0.666);">クリア</span>
<span class="t u " style="left:597px;top:95.5px;font-size:12px;color:#444;transform:scaleX(0.986);">再適用</span>
<span class="t u " style="left:597px;top:118.5px;font-size:12px;color:#444;">詳細設定</span>
<span class="t u " style="left:503.5px;top:141px;font-size:12px;color:#666;transform:scaleX(0.777);">並べ替えとフィルター</span>
<span class="t u " style="left:662.5px;top:105.5px;font-size:12px;color:#444;transform:scaleX(0.941);">区切り位置</span>
<span class="t u " style="left:689px;top:141px;font-size:12px;color:#666;transform:scaleX(0.810);">データ ツール</span>
<span class="t u " style="left:791px;top:105.5px;font-size:12px;color:#444;transform:scaleX(1.091);">What-If 分析</span>
<span class="t u " style="left:876px;top:105.5px;font-size:12px;color:#444;transform:scaleX(0.958);">予測</span>
<span class="t u " style="left:873.5px;top:120px;font-size:12px;color:#444;transform:scaleX(0.777);">シート</span>
<span class="t u " style="left:836.5px;top:141px;font-size:12px;color:#666;transform:scaleX(0.979);">予測</span>
<span class="t u " style="left:919px;top:103.5px;font-size:12px;color:#444;transform:scaleX(0.687);">アウトラ</span>
<span class="t u " style="left:921.5px;top:118px;font-size:12px;color:#444;transform:scaleX(0.729);">イン</span>
<span class="t u " style="left:13px;top:177.5px;font-size:14.67px;color:#444;transform:scaleX(0.933);">C1</span>
<span class="t c " style="left:265px;top:175.8px;font-size:14.67px;color:#4a4a4a;transform:scaleX(1.006);">フリガナ</span>
<span class="t u g" style="left:38.5px;top:211.8px;font-size:13.8px;color:#262626;transform:scaleX(1.087);">A</span>
<span class="t u g" style="left:101.9px;top:211.8px;font-size:13.8px;color:#262626;">B</span>
<span class="t u g" style="left:212.2px;top:211.8px;font-size:13.8px;color:#217346;transform:scaleX(0.963);">C</span>
<span class="t u g" style="left:311.9px;top:211.8px;font-size:13.8px;color:#262626;transform:scaleX(0.923);">D</span>
<span class="t u g" style="left:460.4px;top:211.8px;font-size:13.8px;color:#262626;">E</span>
<span class="t u g" style="left:626.4px;top:211.8px;font-size:13.8px;color:#262626;transform:scaleX(1.090);">F</span>
<span class="t u g" style="left:717.5px;top:211.8px;font-size:13.8px;color:#262626;transform:scaleX(0.932);">G</span>
<span class="t u g" style="left:789.8px;top:211.8px;font-size:13.8px;color:#262626;transform:scaleX(0.943);">H</span>
<span class="t u g" style="left:864.7px;top:211.8px;font-size:13.8px;color:#262626;transform:scaleX(0.937);">I</span>
<span class="t u g" style="left:934.9px;top:211.8px;font-size:13.8px;color:#262626;transform:scaleX(1.043);">J</span>
<span class="t u g" style="left:1005.7px;top:211.8px;font-size:13.8px;color:#262626;transform:scaleX(1.043);">K</span>
<span class="t c " style="left:10.25px;top:229px;font-size:14.67px;color:#217346;transform:scaleX(1.078);">1</span>
<span class="t c " style="left:10.25px;top:247px;font-size:14.67px;color:#262626;transform:scaleX(1.078);">2</span>
<span class="t c " style="left:10.25px;top:265px;font-size:14.67px;color:#262626;transform:scaleX(1.078);">3</span>
<span class="t c " style="left:10.25px;top:283px;font-size:14.67px;color:#262626;transform:scaleX(1.078);">4</span>
<span class="t c " style="left:10.25px;top:301px;font-size:14.67px;color:#262626;transform:scaleX(1.078);">5</span>
<span class="t c " style="left:10.25px;top:319px;font-size:14.67px;color:#262626;transform:scaleX(1.078);">6</span>
<span class="t c " style="left:10.25px;top:337px;font-size:14.67px;color:#262626;transform:scaleX(1.078);">7</span>
<span class="t c " style="left:10.25px;top:355px;font-size:14.67px;color:#262626;transform:scaleX(1.078);">8</span>
<span class="t c " style="left:10.25px;top:373px;font-size:14.67px;color:#262626;transform:scaleX(1.078);">9</span>
<span class="t c " style="left:6.3px;top:391px;font-size:14.67px;color:#262626;transform:scaleX(1.078);">10</span>
<span class="t c " style="left:6.3px;top:409px;font-size:14.67px;color:#262626;transform:scaleX(1.078);">11</span>
<span class="t c " style="left:6.3px;top:427px;font-size:14.67px;color:#262626;transform:scaleX(1.078);">12</span>
<span class="t c " style="left:6.3px;top:445px;font-size:14.67px;color:#262626;transform:scaleX(1.078);">13</span>
<span class="t c " style="left:6.3px;top:463px;font-size:14.67px;color:#262626;transform:scaleX(1.078);">14</span>
<span class="t c " style="left:6.3px;top:481px;font-size:14.67px;color:#262626;transform:scaleX(1.078);">15</span>
<span class="t c " style="left:6.3px;top:499px;font-size:14.67px;color:#262626;transform:scaleX(1.078);">16</span>
<span class="t c " style="left:6.3px;top:517px;font-size:14.67px;color:#262626;transform:scaleX(1.078);">17</span>
<span class="t c " style="left:6.3px;top:535px;font-size:14.67px;color:#262626;transform:scaleX(1.078);">18</span>
<span class="t c " style="left:6.3px;top:553px;font-size:14.67px;color:#262626;transform:scaleX(1.078);">19</span>
<span class="t c " style="left:6.3px;top:571px;font-size:14.67px;color:#262626;transform:scaleX(1.078);">20</span>
<span class="t c " style="left:6.3px;top:589px;font-size:14.67px;color:#262626;transform:scaleX(1.078);">21</span>
<span class="t c " style="left:6.3px;top:607px;font-size:14.67px;color:#262626;transform:scaleX(1.078);">22</span>
<span class="t c " style="left:6.3px;top:625px;font-size:14.67px;color:#262626;transform:scaleX(1.078);">23</span>
<span class="t c " style="left:6.3px;top:643px;font-size:14.67px;color:#262626;transform:scaleX(1.078);">24</span>
<span class="t c " style="left:31px;top:229px;font-size:14.67px;color:#000;transform:scaleX(1.023);">ID</span>
<span class="t c " style="left:59.8px;top:229px;font-size:14.67px;color:#000;transform:scaleX(1.023);">名前</span>
<span class="t c " style="left:158px;top:229px;font-size:14.67px;color:#000;transform:scaleX(0.853);">フリガナ</span>
<span class="t c " style="left:281px;top:229px;font-size:14.67px;color:#000;transform:scaleX(1.006);">郵便番号</span>
<span class="t c " style="left:356.7px;top:229px;font-size:14.67px;color:#000;transform:scaleX(1.023);">住所</span>
<span class="t c " style="left:578px;top:229px;font-size:14.67px;color:#000;transform:scaleX(1.006);">電話番号</span>
<span class="t c " style="left:46.7px;top:247px;font-size:14.67px;color:#000;transform:scaleX(1.037);">9</span>
<span class="t c " style="left:59.8px;top:247px;font-size:14.67px;color:#000;transform:scaleX(1.020);">綾野<span class="s">　</span>亜希</span>
<span class="t c " style="left:158px;top:247px;font-size:14.67px;color:#000;transform:scaleX(0.901);">アヤノ<span class="s">　</span>アキ</span>
<span class="t c " style="left:281px;top:247px;font-size:14.67px;color:#000;transform:scaleX(1.066);">573-0026</span>
<span class="t c " style="left:356.7px;top:247px;font-size:14.67px;color:#000;transform:scaleX(1.023);">大阪府枚方市朝日丘町</span>
<span class="t c " style="left:578px;top:247px;font-size:14.67px;color:#000;transform:scaleX(1.092);">072-84*-****</span>
<span class="t c " style="left:46.7px;top:265px;font-size:14.67px;color:#000;transform:scaleX(1.037);">1</span>
<span class="t c " style="left:59.8px;top:265px;font-size:14.67px;color:#000;transform:scaleX(1.019);">伊藤<span class="s">　</span>武</span>
<span class="t c " style="left:158px;top:265px;font-size:14.67px;color:#000;transform:scaleX(0.868);">イトウ<span class="s">　</span>タケシ</span>
<span class="t c " style="left:281px;top:265px;font-size:14.67px;color:#000;transform:scaleX(1.066);">612-8324</span>
<span class="t c " style="left:356.7px;top:265px;font-size:14.67px;color:#000;transform:scaleX(1.023);">京都府京都市伏見区小豆屋町</span>
<span class="t c " style="left:578px;top:265px;font-size:14.67px;color:#000;transform:scaleX(1.092);">075-5**-****</span>
<span class="t c " style="left:46.7px;top:283px;font-size:14.67px;color:#000;transform:scaleX(1.037);">2</span>
<span class="t c " style="left:59.8px;top:283px;font-size:14.67px;color:#000;transform:scaleX(1.019);">井上<span class="s">　</span>勝</span>
<span class="t c " style="left:158px;top:283px;font-size:14.67px;color:#000;transform:scaleX(0.924);">イノウエ<span class="s">　</span>マサル</span>
<span class="t c " style="left:281px;top:283px;font-size:14.67px;color:#000;transform:scaleX(1.066);">665-0014</span>
<span class="t c " style="left:356.7px;top:283px;font-size:14.67px;color:#000;transform:scaleX(1.023);">兵庫県宝塚市青葉台</span>
<span class="t c " style="left:578px;top:283px;font-size:14.67px;color:#000;transform:scaleX(1.092);">0797-8*-****</span>
<span class="t c " style="left:46.7px;top:301px;font-size:14.67px;color:#000;transform:scaleX(1.037);">3</span>
<span class="t c " style="left:59.8px;top:301px;font-size:14.67px;color:#000;transform:scaleX(1.020);">榎本<span class="s">　</span>幸治</span>
<span class="t c " style="left:158px;top:301px;font-size:14.67px;color:#000;transform:scaleX(0.862);">エノモト<span class="s">　</span>コウジ</span>
<span class="t c " style="left:281px;top:301px;font-size:14.67px;color:#000;transform:scaleX(1.066);">583-0842</span>
<span class="t c " style="left:356.7px;top:301px;font-size:14.67px;color:#000;transform:scaleX(1.023);">大阪府羽曳野市飛鳥</span>
<span class="t c " style="left:578px;top:301px;font-size:14.67px;color:#000;transform:scaleX(1.092);">0729-5*-****</span>
<span class="t c " style="left:39.1px;top:319px;font-size:14.67px;color:#000;transform:scaleX(1.037);">10</span>
<span class="t c " style="left:59.8px;top:319px;font-size:14.67px;color:#000;transform:scaleX(1.020);">江本<span class="s">　</span>綾子</span>
<span class="t c " style="left:158px;top:319px;font-size:14.67px;color:#000;transform:scaleX(0.868);">エモト<span class="s">　</span>アヤコ</span>
<span class="t c " style="left:281px;top:319px;font-size:14.67px;color:#000;transform:scaleX(1.066);">545-0000</span>
<span class="t c " style="left:356.7px;top:319px;font-size:14.67px;color:#000;transform:scaleX(1.023);">大阪府大阪市阿倍野区</span>
<span class="t c " style="left:578px;top:319px;font-size:14.67px;color:#000;transform:scaleX(1.092);">06-67**-****</span>
<span class="t c " style="left:46.7px;top:337px;font-size:14.67px;color:#000;transform:scaleX(1.037);">4</span>
<span class="t c " style="left:59.8px;top:337px;font-size:14.67px;color:#000;transform:scaleX(1.019);">太田<span class="s">　</span>博</span>
<span class="t c " style="left:158px;top:337px;font-size:14.67px;color:#000;transform:scaleX(0.892);">オオタ ヒロシ</span>
<span class="t c " style="left:281px;top:337px;font-size:14.67px;color:#000;transform:scaleX(1.066);">560-0015</span>
<span class="t c " style="left:356.7px;top:337px;font-size:14.67px;color:#000;transform:scaleX(1.023);">大阪府豊中市赤阪</span>
<span class="t c " style="left:578px;top:337px;font-size:14.67px;color:#000;transform:scaleX(1.092);">06-68**-****</span>
<span class="t c " style="left:39.1px;top:355px;font-size:14.67px;color:#000;transform:scaleX(1.037);">11</span>
<span class="t c " style="left:59.8px;top:355px;font-size:14.67px;color:#000;transform:scaleX(1.021);">岡田<span class="s">　</span>優梨子</span>
<span class="t c " style="left:158px;top:355px;font-size:14.67px;color:#000;transform:scaleX(0.888);">オカダ<span class="s">　</span>ユリコ</span>
<span class="t c " style="left:281px;top:355px;font-size:14.67px;color:#000;transform:scaleX(1.066);">675-0026</span>
<span class="t c " style="left:356.7px;top:355px;font-size:14.67px;color:#000;transform:scaleX(1.023);">兵庫県加古川市尾上町旭</span>
<span class="t c " style="left:578px;top:355px;font-size:14.67px;color:#000;transform:scaleX(1.092);">0794-2*-****</span>
<span class="t c " style="left:39.1px;top:373px;font-size:14.67px;color:#000;transform:scaleX(1.037);">12</span>
<span class="t c " style="left:59.8px;top:373px;font-size:14.67px;color:#000;transform:scaleX(1.020);">加藤<span class="s">　</span>裕美</span>
<span class="t c " style="left:158px;top:373px;font-size:14.67px;color:#000;transform:scaleX(0.853);">カトウ<span class="s">　</span>ユミ</span>
<span class="t c " style="left:281px;top:373px;font-size:14.67px;color:#000;transform:scaleX(1.066);">631-0053</span>
<span class="t c " style="left:356.7px;top:373px;font-size:14.67px;color:#000;transform:scaleX(1.023);">奈良県奈良市青垣台</span>
<span class="t c " style="left:578px;top:373px;font-size:14.67px;color:#000;transform:scaleX(1.092);">0742-4*-****</span>
<span class="t c " style="left:46.7px;top:391px;font-size:14.67px;color:#000;transform:scaleX(1.037);">5</span>
<span class="t c " style="left:59.8px;top:391px;font-size:14.67px;color:#000;transform:scaleX(1.019);">萱島<span class="s">　</span>真</span>
<span class="t c " style="left:158px;top:391px;font-size:14.67px;color:#000;transform:scaleX(0.870);">カヤシマ<span class="s">　</span>マコト</span>
<span class="t c " style="left:281px;top:391px;font-size:14.67px;color:#000;transform:scaleX(1.066);">569-1146</span>
<span class="t c " style="left:356.7px;top:391px;font-size:14.67px;color:#000;transform:scaleX(1.023);">大阪府高槻市赤大路町</span>
<span class="t c " style="left:578px;top:391px;font-size:14.67px;color:#000;transform:scaleX(1.092);">0726-9*-****</span>
<span class="t c " style="left:46.7px;top:409px;font-size:14.67px;color:#000;transform:scaleX(1.037);">6</span>
<span class="t c " style="left:59.8px;top:409px;font-size:14.67px;color:#000;transform:scaleX(1.020);">木下<span class="s">　</span>宏道</span>
<span class="t c " style="left:158px;top:409px;font-size:14.67px;color:#000;transform:scaleX(0.851);">キノシタ ヒロミチ</span>
<span class="t c " style="left:281px;top:409px;font-size:14.67px;color:#000;transform:scaleX(1.066);">598-0014</span>
<span class="t c " style="left:356.7px;top:409px;font-size:14.67px;color:#000;transform:scaleX(1.023);">大阪府泉佐野市葵町</span>
<span class="t c " style="left:578px;top:409px;font-size:14.67px;color:#000;transform:scaleX(1.092);">0724-6*-****</span>
<span class="t c " style="left:46.7px;top:427px;font-size:14.67px;color:#000;transform:scaleX(1.037);">7</span>
<span class="t c " style="left:59.8px;top:427px;font-size:14.67px;color:#000;transform:scaleX(1.020);">久部<span class="s">　</span>明弘</span>
<span class="t c " style="left:158px;top:427px;font-size:14.67px;color:#000;transform:scaleX(0.888);">クベ<span class="s">　</span>アキヒロ</span>
<span class="t c " style="left:281px;top:427px;font-size:14.67px;color:#000;transform:scaleX(1.066);">541-0052</span>
<span class="t c " style="left:356.7px;top:427px;font-size:14.67px;color:#000;transform:scaleX(1.023);">大阪府大阪市中央区安土町</span>
<span class="t c " style="left:578px;top:427px;font-size:14.67px;color:#000;transform:scaleX(1.092);">06-67**-****</span>
<span class="t c " style="left:39.1px;top:445px;font-size:14.67px;color:#000;transform:scaleX(1.037);">13</span>
<span class="t c " style="left:59.8px;top:445px;font-size:14.67px;color:#000;transform:scaleX(1.021);">河野<span class="s">　</span>恵美子</span>
<span class="t c " style="left:158px;top:445px;font-size:14.67px;color:#000;transform:scaleX(0.837);">コウノ<span class="s">　</span>エミコ</span>
<span class="t c " style="left:281px;top:445px;font-size:14.67px;color:#000;transform:scaleX(1.066);">601-1394</span>
<span class="t c " style="left:356.7px;top:445px;font-size:14.67px;color:#000;transform:scaleX(1.023);">京都府宇治市池尾</span>
<span class="t c " style="left:578px;top:445px;font-size:14.67px;color:#000;transform:scaleX(1.092);">0774-3*-****</span>
<span class="t c " style="left:46.7px;top:463px;font-size:14.67px;color:#000;transform:scaleX(1.037);">8</span>
<span class="t c " style="left:59.8px;top:463px;font-size:14.67px;color:#000;transform:scaleX(1.020);">児玉<span class="s">　</span>智弘</span>
<span class="t c " style="left:158px;top:463px;font-size:14.67px;color:#000;transform:scaleX(0.873);">コダマ トモヒロ</span>
<span class="t c " style="left:281px;top:463px;font-size:14.67px;color:#000;transform:scaleX(1.066);">600-8071</span>
<span class="t c " style="left:356.7px;top:463px;font-size:14.67px;color:#000;transform:scaleX(1.023);">京都府京都市下京区相之町</span>
<span class="t c " style="left:578px;top:463px;font-size:14.67px;color:#000;transform:scaleX(1.092);">075-3**-****</span>
<span class="t c " style="left:39.1px;top:481px;font-size:14.67px;color:#000;transform:scaleX(1.037);">14</span>
<span class="t c " style="left:59.8px;top:481px;font-size:14.67px;color:#000;transform:scaleX(1.020);">斎藤<span class="s">　</span>美恵</span>
<span class="t c " style="left:158px;top:481px;font-size:14.67px;color:#000;transform:scaleX(0.847);">サイトウ<span class="s">　</span>ミエ</span>
<span class="t c " style="left:281px;top:481px;font-size:14.67px;color:#000;transform:scaleX(1.066);">532-0031</span>
<span class="t c " style="left:356.7px;top:481px;font-size:14.67px;color:#000;transform:scaleX(1.023);">大阪府大阪市淀川区加島</span>
<span class="t c " style="left:578px;top:481px;font-size:14.67px;color:#000;transform:scaleX(1.092);">06-63**-****</span>
<span class="t c " style="left:39.1px;top:499px;font-size:14.67px;color:#000;transform:scaleX(1.037);">15</span>
<span class="t c " style="left:59.8px;top:499px;font-size:14.67px;color:#000;transform:scaleX(1.020);">篠原<span class="s">　</span>信子</span>
<span class="t c " style="left:158px;top:499px;font-size:14.67px;color:#000;transform:scaleX(0.864);">シノハラ ノブコ</span>
<span class="t c " style="left:281px;top:499px;font-size:14.67px;color:#000;transform:scaleX(1.066);">591-8007</span>
<span class="t c " style="left:356.7px;top:499px;font-size:14.67px;color:#000;transform:scaleX(1.023);">大阪府堺市北区奥本町</span>
<span class="t c " style="left:578px;top:499px;font-size:14.67px;color:#000;transform:scaleX(1.092);">0729-3*-****</span>
<span class="t c " style="left:39.1px;top:517px;font-size:14.67px;color:#000;transform:scaleX(1.037);">16</span>
<span class="t c " style="left:59.8px;top:517px;font-size:14.67px;color:#000;transform:scaleX(1.020);">田中<span class="s">　</span>裕子</span>
<span class="t c " style="left:158px;top:517px;font-size:14.67px;color:#000;transform:scaleX(0.888);">タナカ<span class="s">　</span>ユウコ</span>
<span class="t c " style="left:281px;top:517px;font-size:14.67px;color:#000;transform:scaleX(1.066);">662-0063</span>
<span class="t c " style="left:356.7px;top:517px;font-size:14.67px;color:#000;transform:scaleX(1.023);">兵庫県西宮市相生町</span>
<span class="t c " style="left:578px;top:517px;font-size:14.67px;color:#000;transform:scaleX(1.092);">0798-6*-****</span>
<span class="t u " style="left:113px;top:662.2px;font-size:12.6px;color:#217346;transform:scaleX(1.045);">住所録</span>
<span class="t u " style="left:175.5px;top:662.2px;font-size:12.6px;color:#444;transform:scaleX(1.010);">都道府県で分割</span>
<span class="t u " style="left:289.5px;top:662.2px;font-size:12.6px;color:#444;transform:scaleX(0.924);">都道府県コード</span>
<span class="t u " style="left:8px;top:688px;font-size:12px;color:#444;">準備完了</span>
<span class="t u " style="left:1024.5px;top:687.5px;font-size:12px;color:#444;transform:scaleX(1.042);">100%</span></div></div></body></html>
